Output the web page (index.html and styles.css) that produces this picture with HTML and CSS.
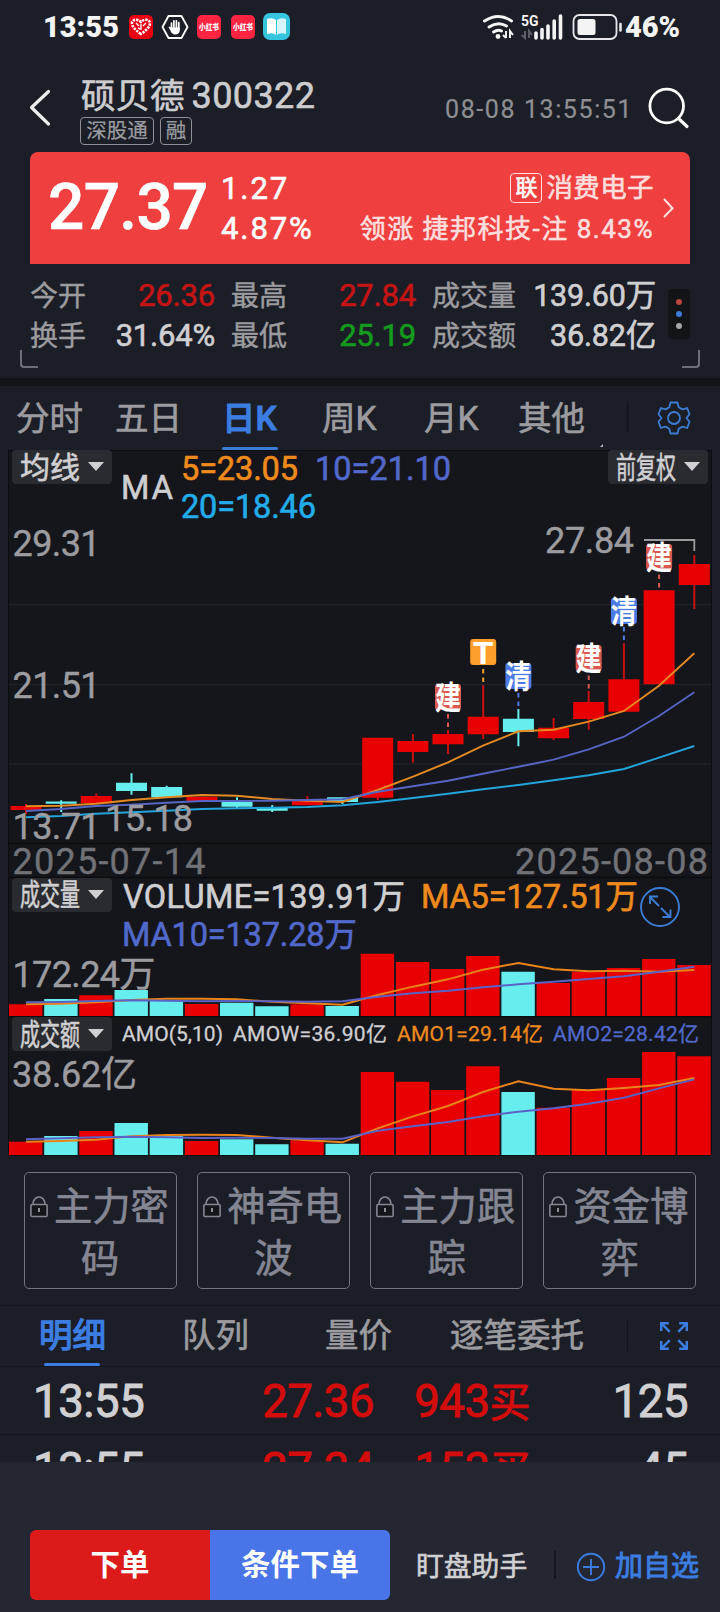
FILE: index.html
```html
<!DOCTYPE html>
<html lang="zh-CN">
<head>
<meta charset="utf-8">
<title>硕贝德 300322</title>
<link rel="stylesheet" href="styles.css">
</head>
<body>
<div class="status">
  <span class="clock">13:55</span>
  <svg class="st-icons" width="162" height="28" viewBox="129 13 162 28">
    <rect x="129" y="15" width="24" height="24" rx="5" fill="#e60012"/>
    <path d="M141 34C134 29 132 26 132 23c0-3 5-5 9-1 4-4 9-2 9 1 0 3-2 6-9 11z" fill="none" stroke="#fff" stroke-width="2.6" stroke-dasharray="2.4 1"/>
    <path d="M136 23l3 3M141 24v6M146 23l-3 3M138 28l2 1" stroke="#fff" stroke-width="1.4"/>
    <path d="M168.500 16h13l6 11-6 11h-13l-6-11z" fill="none" stroke="#fff" stroke-width="1.800" stroke-linejoin="round"/>
    <path d="M171.500 23v6M173.900 20.800v8M176.400 20.800v8M178.800 22.500v7M169.500 27.500l3 4" stroke="#fff" stroke-width="1.700" stroke-linecap="round"/>
    <path d="M170.700 27.500h9v3c0 5-7 5.500-9 1z" fill="#fff"/>
    <rect x="197" y="15" width="24" height="24" rx="5" fill="#ff2442"/>
    <rect x="231" y="15" width="24" height="24" rx="5" fill="#ff2442"/>
    <g class="xhs"><text x="199" y="30" textLength="20" lengthAdjust="spacingAndGlyphs">小红书</text><text x="233" y="30" textLength="20" lengthAdjust="spacingAndGlyphs">小红书</text></g>
    <rect x="263" y="13" width="27" height="27" rx="7" fill="#35c5de"/>
    <path d="M267 19q6-2 9 1v15q-3-3-9-1z" fill="#fff"/><path d="M286 19q-6-2-9 1v15q3-3 9-1z" fill="#d6f6fb"/>
  </svg>
  <svg class="st-right" width="142" height="28" viewBox="481 13 142 28">
    <g fill="none" stroke="#f4f4f5" stroke-width="3" stroke-linecap="round">
      <path d="M484.500 21q14-9 27 0"/><path d="M489 27q9-6 17.500-1"/><path d="M493.500 32q4.500-3 8-1"/>
    </g>
    <circle cx="498" cy="36.500" r="2.400" fill="#f4f4f5"/>
    <path d="M506 31v7M503 35l3 3M510 38v-7l3 4" fill="none" stroke="#f4f4f5" stroke-width="2"/>
    <text class="net" x="521" y="26" textLength="17.500" lengthAdjust="spacingAndGlyphs">5G</text>
    <path d="M525 31v7l-3-3M529 38v-7l3 4" fill="none" stroke="#5b5d66" stroke-width="2"/>
    <path d="M536 33v5M542 29.500v8.500M548 26v12M554.200 21v17M560.500 16v22" stroke="#f4f4f5" stroke-width="3.600" stroke-linecap="round"/>
    <rect x="573.500" y="15" width="43" height="24" rx="6" fill="none" stroke="#e6e6ea" stroke-width="1.800"/>
    <rect x="577.500" y="19" width="18" height="16" rx="2.500" fill="#f4f4f5"/>
    <path d="M620.500 24v6.500" stroke="#e6e6ea" stroke-width="2.600" stroke-linecap="round"/>
  </svg>
  <span class="batt">46%</span>
</div>

<header class="head">
  <svg class="back" width="26" height="40" viewBox="27 88 26 40"><path d="M48.500 91.500L31.500 107.500L48.500 124" fill="none" stroke="#ededee" stroke-width="3.200" stroke-linecap="round" stroke-linejoin="round"/></svg>
  <div class="stock">
    <div class="stock-name"><span>硕贝德</span><span class="code">300322</span></div>
    <div class="tags"><span class="tag tag-w">深股通</span><span class="tag">融</span></div>
  </div>
  <span class="stamp">08-08 13:55:51</span>
  <svg class="search" width="44" height="44" viewBox="648 86 44 44"><circle cx="667.700" cy="106" r="16.800" fill="none" stroke="#fff" stroke-width="2.800"/><path d="M679.500 118.500l8.500 8" stroke="#fff" stroke-width="3.200" stroke-linecap="round"/></svg>
</header>

<section class="banner">
  <div class="price">27.37</div>
  <div class="change"><span>1.27</span><span>4.87%</span></div>
  <div class="sector">
    <div class="sector-top"><span class="link">联</span><span class="sector-name">消费电子</span></div>
    <div class="leader">领涨 捷邦科技-注 8.43%</div>
  </div>
  <svg width="14" height="24" viewBox="662 196 14 24"><path d="M664 199l8.500 9.200L664 217" fill="none" stroke="#ffe3e2" stroke-width="2"/></svg>
</section>

<section class="stats">
  <div class="stat-grid">
    <span class="lab">今开</span><span class="val red">26.36</span>
    <span class="lab">最高</span><span class="val red">27.84</span>
    <span class="lab">成交量</span><span class="val">139.60万</span>
    <span class="lab">换手</span><span class="val">31.64%</span>
    <span class="lab">最低</span><span class="val green">25.19</span>
    <span class="lab">成交额</span><span class="val">36.82亿</span>
  </div>
  <div class="more"><i class="d1"></i><i class="d2"></i><i class="d3"></i></div>
  <i class="corner cl"></i><i class="corner cr"></i>
</section>

<nav class="ktabs">
  <span class="kt k1">分时</span><span class="kt k2">五日</span><span class="kt k3 on">日K</span><span class="kt k4">周K</span><span class="kt k5">月K</span><span class="kt k6">其他</span>
  <svg class="tab-tail" width="104" height="64" viewBox="596 386 104 64">
    <path d="M603 444v3h-3z" fill="#b9b9bd"/>
    <path d="M627.500 403v29" stroke="#121318" stroke-width="1.400"/>
    <g fill="none" stroke="#3b7dd2" stroke-width="1.800" stroke-linejoin="round">
      <circle cx="674" cy="418" r="6"/>
      <path d="M670.500 402.500h7l1.200 4.800 3.800 2.100 4.700-1.400 2.300 6.200-3 3.800 3 3.800-2.300 6.200-4.700-1.400-3.800 2.100-1.200 4.800h-7l-1.200-4.800-3.800-2.100-4.700 1.400-2.300-6.200 3-3.800-3-3.800 2.300-6.200 4.700 1.400 3.800-2.100z"/>
    </g>
  </svg>
</nav>

<section class="charts">
  <svg class="plot" width="720" height="706" viewBox="0 450 720 706">
    <rect x="8.500" y="450.500" width="703" height="705.500" fill="#15161b" stroke="#0c0d10"/>
    <path d="M9 604.500H711M9 684.500H711M9 764H711" stroke="#212227" stroke-width="1.300"/>
    <path d="M9 843.500H711M9 877.500H711M9 1016.800H711" stroke="#0b0c0f" stroke-width="1.500"/>

    <g stroke="#c81010" stroke-width="2">
      <path d="M26 804V814M96.300 793.500V803M307.400 796V805M377.700 738V800M412.900 734V762.700M448 730V754M483.200 685V739M553.600 718V740M588.700 691V729.700M623.900 643.300V711M694.300 555V609"/>
    </g>
    <path d="M61.200 800.300V812M131.500 773.300V794.700M166.700 785.700V798M237 797.300V809M272.200 805V812M342.500 798V804M518.400 709V746.300" stroke="#66eeee" stroke-width="2"/>
    <path d="M26 806V810M96.300 796V803.300M201.900 796.700V801M307.400 801V805.300M377.700 737.700V797.700M412.900 741V752M448 734V744.300M483.200 716.700V734.300M553.600 727.700V738.300M588.700 702V719M623.900 679.300V711.700M659.100 590.300V684.300M694.300 564V585" stroke="#e80000" stroke-width="31"/>
    <path d="M61.200 801.500V803.700M131.500 782.700V791M166.700 787V797.300M237 801.700V806.700M272.200 808V810.700M342.500 797.300V802M518.400 718.700V732" stroke="#66eeee" stroke-width="31"/>

    <g fill="none" stroke-width="1.900">
      <polyline stroke="#e58a22" points="26,806.300 61,805.700 96,803.700 131.500,800 166.700,797.300 202,795 237,795.700 272,799 307.400,800.700 342.500,802 377.700,790 413,776.700 448,762.300 483,745.700 518.400,731.300 553.600,729.700 588.700,721.700 624,711 659,685.700 694.300,653.300"/>
      <polyline stroke="#5566c4" points="26,811 61,809 96,806 131.500,804.700 166.700,802.700 202,801 237,801 272,800.700 307.400,800 342.500,799.300 377.700,791.700 413,786.300 448,780.700 483,773.700 518.400,766.700 553.600,759.700 588.700,749.300 624,736.700 659,716 694.300,692.300"/>
      <polyline stroke="#22a5da" points="26,817.300 61,816 96,813.700 131.500,812.300 166.700,810.700 202,809 237,808.300 272,807.700 307.400,807 342.500,805.300 377.700,802 413,798 448,793.700 483,789.300 518.400,785 553.600,780.300 588.700,775.300 624,769 659,757.700 694.300,746"/>
      <path d="M644 540H694.300V551" stroke="#9a9a9f" stroke-width="1.800"/>
    </g>

    <g stroke-width="2" stroke-dasharray="4.500 4">
      <path d="M448 714V730M588.700 675.500V691M659.100 574.500V590" stroke="#d8594f"/>
      <path d="M483.200 669V685" stroke="#f5a02e"/>
      <path d="M518.400 693V709M623.900 627V643" stroke="#4d7be6"/>
    </g>
    <g fill="#d8594f"><rect x="435" y="684" width="26" height="26" rx="3"/><rect x="575.700" y="645" width="26" height="26" rx="3"/><rect x="646.100" y="544" width="26" height="26" rx="3"/></g>
    <g fill="#4d7be6"><rect x="505.400" y="663" width="26" height="26" rx="3"/><rect x="610.900" y="598" width="26" height="26" rx="3"/></g>
    <rect x="470.200" y="639" width="26" height="26" rx="3" fill="#ff9e2b"/>
    <g class="flag">
      <text transform="translate(448 708.500) scale(.82 1)">建</text>
      <text transform="translate(588.700 669.500) scale(.82 1)">建</text>
      <text transform="translate(659.100 568.500) scale(.82 1)">建</text>
      <text transform="translate(518.400 687.500) scale(.82 1)">清</text>
      <text transform="translate(623.900 622.500) scale(.82 1)">清</text>
      <text transform="translate(483.200 664) scale(1.050 1)">T</text>
    </g>

    <g class="legend">
      <text x="121" y="498.500" textLength="52" color="#cfcfd2">MA</text>
      <text x="181" y="480" textLength="117" color="#ef8a1c">5=23.05</text>
      <text x="315" y="480" textLength="136" color="#5269cc">10=21.10</text>
      <text x="181" y="518" textLength="135" color="#22acea">20=18.46</text>
      <text x="123" y="908" textLength="282" color="#cfcfd2">VOLUME=139.91万</text>
      <text x="421" y="908" textLength="217" color="#ef8a1c">MA5=127.51万</text>
      <text x="122" y="946" textLength="235" color="#5269cc">MA10=137.28万</text>
    </g>
    <g class="axis">
      <text x="12.500" y="556" textLength="88">29.31</text>
      <text x="12.500" y="698" textLength="88">21.51</text>
      <text x="12.500" y="839" textLength="88">13.71</text>
      <text x="105" y="831" textLength="88">15.18</text>
      <text x="545" y="553" textLength="89">27.84</text>
      <text x="12.500" y="987" textLength="143">172.24万</text>
      <text x="12" y="1086.500" textLength="125">38.62亿</text>
      <text class="day" x="12.500" y="874" textLength="193">2025-07-14</text>
      <text class="day" x="515" y="874" textLength="193">2025-08-08</text>
    </g>
    <g class="amo">
      <text x="122" y="1041.300" textLength="101" color="#cfcfd2">AMO(5,10)</text>
      <text x="233" y="1041.300" textLength="154" color="#cfcfd2">AMOW=36.90亿</text>
      <text x="397" y="1041.300" textLength="146" color="#ef8a1c">AMO1=29.14亿</text>
      <text x="553" y="1041.300" textLength="146" color="#5269cc">AMO2=28.42亿</text>
    </g>
    <g fill="none" stroke="#3b7dd2" stroke-width="1.900">
      <circle cx="660" cy="907" r="19"/>
      <path d="M659 906l-9-9M650 904v-7.500h8M661 908l9 9M670.500 909.500v7.500h-8"/>
    </g>

    <g stroke-width="33.400">
      <path stroke="#e80000" d="M25.700 1016V1004.300M96 1016V995.300M201.600 1016V1004M307.100 1016V1004.300M377.400 1016V953.700M412.600 1016V962M447.700 1016V969M482.900 1016V956M553.300 1016V983M588.400 1016V971.700M623.600 1016V968M658.800 1016V959M694 1016V965"/>
      <path stroke="#66eeee" d="M60.900 1016V999M131.200 1016V990M166.400 1016V1000.300M236.700 1016V1002.700M271.900 1016V1006.300M342.200 1016V1006M518.100 1016V971.700"/>
      <path stroke="#e80000" d="M25.700 1155V1141.700M96 1155V1131M201.600 1155V1141M307.100 1155V1140.300M377.400 1155V1072M412.600 1155V1081.700M447.700 1155V1090M482.900 1155V1066.300M553.300 1155V1107.700M588.400 1155V1090M623.600 1155V1078M658.800 1155V1052M694 1155V1056.300"/>
      <path stroke="#66eeee" d="M60.900 1155V1136M131.200 1155V1123M166.400 1155V1136M236.700 1155V1139.300M271.900 1155V1144.300M342.200 1155V1143.700M518.100 1155V1092"/>
    </g>
    <g fill="none" stroke-width="1.900">
      <polyline stroke="#e98418" points="26,1004.300 61,1003.700 96,1002.300 131.500,1000 166.700,998.700 202,998.700 237,999.300 272,1001.700 307.400,1003.300 342.500,1004.700 377.700,995 413,986.700 448,979.300 483,969.700 518.400,963 553.600,969.300 588.700,971.300 624,970.700 659,971.700 694.300,970"/>
      <polyline stroke="#5a62c8" points="26,1002.300 61,1002 96,1001 131.500,1000.300 166.700,1000.700 202,1001.300 237,1001 272,1001.300 307.400,1001.700 342.500,1001.300 377.700,996.700 413,993.300 448,990.700 483,987.300 518.400,984.300 553.600,981.700 588.700,979 624,976.300 659,971.700 694.300,966.700"/>
      <polyline stroke="#e98418" points="26,1141.700 61,1141 96,1139.700 131.500,1136.300 166.700,1135 202,1134.700 237,1135 272,1137.700 307.400,1140.300 342.500,1142.300 377.700,1128.300 413,1116.300 448,1106 483,1092 518.400,1081.300 553.600,1088.700 588.700,1090.300 624,1088 659,1085 694.300,1078"/>
      <polyline stroke="#5a62c8" points="26,1139.300 61,1138.300 96,1137.300 131.500,1136.700 166.700,1137.300 202,1138 237,1137.700 272,1138 307.400,1138.700 342.500,1138.700 377.700,1130.700 413,1126.300 448,1122 483,1116.300 518.400,1111.700 553.600,1108.300 588.700,1103.700 624,1097.700 659,1088.300 694.300,1079.300"/>
    </g>
  </svg>
  <div class="pane pane-k">
    <button class="drop wide"><span>均线</span><i></i></button>
    <button class="drop"><span>前复权</span><i></i></button>
  </div>
  <div class="pane pane-v"><button class="drop"><span>成交量</span><i></i></button></div>
  <div class="pane pane-a"><button class="drop"><span>成交额</span><i></i></button></div>
</section>

<section class="locks">
  <div class="lock"><svg width="18" height="22" viewBox="0 0 18 22"><g id="padlock" fill="none" stroke="#858693" stroke-width="1.600"><path d="M3 8.500C3 -1.500 15 -1.500 15 8.500"/><rect x=".9" y="8.500" width="16.200" height="12" rx="1" fill="#15161b"/><path d="M9 12v4" stroke="#b0b0b8"/></g></svg><span>主力密</span><b>码</b></div>
  <div class="lock"><svg width="18" height="22" viewBox="0 0 18 22"><use href="#padlock"/></svg><span>神奇电</span><b>波</b></div>
  <div class="lock"><svg width="18" height="22" viewBox="0 0 18 22"><use href="#padlock"/></svg><span>主力跟</span><b>踪</b></div>
  <div class="lock"><svg width="18" height="22" viewBox="0 0 18 22"><use href="#padlock"/></svg><span>资金博</span><b>弈</b></div>
</section>

<nav class="dtabs">
  <span class="dt on">明细</span><span class="dt">队列</span><span class="dt">量价</span><span class="dt dt-w">逐笔委托</span>
  <i class="vline"></i>
  <svg class="expand" width="30" height="30" viewBox="659 1321 30 30" fill="none" stroke="#3b7de0" stroke-width="2.400"><path d="M661.200 1331v-7.800h7.600M661.200 1323.200l8.600 8.600M679.200 1323.200h7.600v7.800M686.800 1323.200l-8.600 8.600M661.200 1341v7.800h7.600M661.200 1348.800l8.600-8.600M679.200 1348.800h7.600v-7.800M686.800 1348.800l-8.600-8.600"/></svg>
</nav>

<section class="list">
  <div class="row"><span>13:55</span><span class="red2">27.36</span><span class="red2">943<em>买</em></span><span>125</span></div>
  <div class="row"><span>13:55</span><span class="red2">27.34</span><span class="red2">153<em>买</em></span><span>45</span></div>
</section>

<footer class="foot">
  <button class="order">下单</button><button class="cond">条件下单</button>
  <span class="watch">盯盘助手</span>
  <i class="fline"></i>
  <span class="add"><svg width="30" height="30" viewBox="0 0 30 30" fill="none" stroke="#3b7de0" stroke-width="1.900"><circle cx="15" cy="15" r="13.200"/><path d="M7 15h16M15 7v16"/></svg>加自选</span>
</footer>
</body>
</html>
```
FILE: styles.css
```css
* { box-sizing: border-box; }
body {
  margin: 0; width: 720px; height: 1612px; overflow: hidden;
  background: #1c1e27; color: #d0d0d2;
  font-family: Roboto, "Noto Sans CJK SC", sans-serif; font-weight: 400;
  -webkit-text-stroke: .6px;
}
i, em { font-style: normal; }
svg { display: block; flex: none; }
button { border: 0; padding: 0; font: inherit; color: inherit; }

.status { height: 54px; display: flex; align-items: center; padding-left: 43px; -webkit-text-stroke: 0; }
.clock, .batt { font-size: 29px; line-height: 58px; font-weight: 900; color: #f4f4f5; white-space: nowrap; }
.clock { width: 86px; }
.st-icons { width: 162px; }
.st-right { margin-left: 190px; }
.batt { margin-left: 2px; }
.xhs { font: 900 8.500px "Noto Sans CJK SC", sans-serif; fill: #fff; }
.net { font: 700 15px Roboto, sans-serif; fill: #f4f4f5; }

.head { height: 98px; display: flex; align-items: flex-start; padding-left: 27px; }
.back { margin-top: 34px; }
.stock { width: 365px; padding: 20px 0 0 27px; }
.stock-name { display: flex; height: 43px; align-items: center; font-size: 34.500px; line-height: 44px; white-space: nowrap; color: #cdcdcf; padding-left: 1px; }
.code { font-size: 36px; margin-left: 7px; letter-spacing: .4px; }
.tags { display: flex; gap: 6px; }
.tag { width: 32px; height: 28px; border: 1.500px solid #8f9096; border-radius: 4px; font-size: 20.500px; line-height: 27px; text-align: center; color: #9b9ca1; -webkit-text-stroke: .2px; }
.tag-w { width: 74px; }
.stamp { margin-top: 40px; margin-left: 27px; width: 202px; font-size: 25px; line-height: 32px; letter-spacing: 1.600px; color: #8e8e93; -webkit-text-stroke: .2px; white-space: nowrap; }
.search { margin-top: 32px; }

.banner { margin: 0 30px; height: 112px; background: #ef403f; border-radius: 8px 8px 0 0; display: flex; align-items: center; padding: 0 14px 0 18px; color: #fff; }
.price { width: 173px; font-size: 64px; line-height: 114px; letter-spacing: -.7px; font-weight: 500; }
.change { width: 96px; display: flex; flex-direction: column; font-size: 31px; line-height: 40.500px; letter-spacing: 1.900px; padding-top: 2px; }
.sector { flex: 1; display: flex; flex-direction: column; align-items: flex-end; color: #ffdedd; line-height: 40px; white-space: nowrap; margin-right: 8px; padding-top: 1px; }
.sector-top { display: flex; align-items: center; height: 40px; gap: 4px; }
.link { width: 32px; height: 30px; border: 1.500px solid #ffdedd; border-radius: 4px; font-size: 22px; line-height: 28px; text-align: center; color: #fff; }
.sector-name { font-size: 26.500px; letter-spacing: .4px; line-height: 42px; }
.leader { font-size: 26px; letter-spacing: 1.500px; line-height: 42px; }

.stats { position: relative; height: 122px; padding: 12px 30px 0; border-bottom: 8px solid #131417; display: flex; }
.stat-grid { width: 626px; display: grid; grid-template-columns: 75px 110px 73px 128px 92px 148px; grid-auto-rows: 40px; line-height: 40px; white-space: nowrap; }
.lab { font-size: 28px; color: #9c9ca0; -webkit-text-stroke: .4px; padding-top: 1px; }
.lab:nth-child(6n+3), .lab:nth-child(6n+5) { padding-left: 16px; }
.val { font-size: 31px; text-align: right; letter-spacing: -.2px; }
.lab:nth-child(6n+5) + .val { font-size: 30.500px; }
.red { color: #c41414; } .green { color: #149a1c; }
.more { margin: 13px 0 0 12px; width: 22px; height: 50px; border-radius: 4px; background: #131418; display: flex; flex-direction: column; align-items: center; justify-content: center; gap: 6px; }
.more i { width: 6px; height: 6px; border-radius: 3px; }
.d1 { background: #b8463c; } .d2 { background: #3b7dd8; } .d3 { background: #a6a6aa; }
.corner { position: absolute; top: 86px; width: 18px; height: 18px; border-bottom: 2px solid #6e6f76; }
.cl { left: 20px; border-left: 2px solid #6e6f76; border-bottom-left-radius: 4px; }
.cr { right: 20px; border-right: 2px solid #6e6f76; border-bottom-right-radius: 4px; }

.ktabs { height: 64px; display: flex; padding-left: 16px; }
.kt { font-size: 33.500px; line-height: 65px; height: 64px; color: #9c9ca0; white-space: nowrap; }
.kt.on { color: #3b7de0; font-weight: 500; -webkit-text-stroke: 1px; }
.kt.on::after { content: ""; display: block; width: 56px; height: 3px; margin-top: -4px; border-radius: 2px; background: #3b7dd2; }
.k1 { width: 99px; } .k2 { width: 107px; } .k3 { width: 100px; } .k4 { width: 102px; } .k5 { width: 94px; } .k6 { width: 78px; }

.charts { position: relative; height: 706px; }
.plot { position: absolute; left: 0; top: 0; }
.pane { position: relative; display: flex; justify-content: space-between; align-items: flex-start; padding: 0 12px; }
.pane-k { height: 427.500px; } .pane-v { height: 139.500px; } .pane-a { height: 139px; }
.drop { width: 100px; height: 34px; border-radius: 4px; background: #2a2b30; color: #d0d0d2; display: flex; align-items: center; padding-left: 8px; }
.drop span { flex: none; width: 90px; font-size: 30px; line-height: 35px; white-space: nowrap; transform: scaleX(.667); transform-origin: 0 50%; margin-right: -22px; text-align: left; }
.drop.wide span { width: 60px; transform: none; margin-right: 8px; }
.drop i { border: 8px solid transparent; border-top: 9px solid #d0d0d2; border-bottom: 0; margin-top: -1px; }
.flag { font: 700 32px Roboto, "Noto Sans CJK SC", sans-serif; fill: #fff; text-anchor: middle; }
.legend { font-size: 32.500px; stroke-width: .6px; }
.legend text, .amo text { fill: currentColor; stroke: currentColor; }
.axis { font-size: 36px; fill: #9c9ca0; stroke: #9c9ca0; stroke-width: .4px; }
.axis .day { fill: #717277; stroke: #717277; }
.amo { font-size: 21px; stroke-width: .3px; }

.locks { height: 150px; padding: 16px 24px 0; display: grid; grid-template-columns: repeat(4, 152.500px); justify-content: space-between; border-bottom: 1px solid #14151a; }
.lock { height: 117px; border: 1.500px solid #737480; border-radius: 5px; display: flex; flex-wrap: wrap; align-content: flex-start; align-items: center; padding: 8px 0 0 5px; color: #858693; font-size: 38.300px; line-height: 51.500px; }
.lock span { margin-left: 6px; white-space: nowrap; }
.lock b { width: 100%; text-align: center; font-weight: 400; padding-right: 5px; }

.dtabs { height: 61px; display: flex; padding-left: 39px; border-bottom: 1px solid #14151a; }
.dt { width: 143px; font-size: 33.500px; line-height: 60px; height: 61px; color: #9c9ca0; white-space: nowrap; }
.dt:nth-child(3) { width: 125px; }
.dt-w { width: 177px; }
.dt.on { color: #3b7de0; -webkit-text-stroke: 1.300px; }
.dt.on::after { content: ""; display: block; width: 56px; height: 3px; margin: -3px 0 0 5px; border-radius: 2px; background: #3b7de0; }
.vline { width: 1px; height: 30px; margin-top: 15px; background: #121318; }
.expand { margin: 15px 0 0 31px; }

.list { height: 95px; overflow: hidden; }
.row { height: 68px; border-bottom: 1px solid #14151a; display: grid; grid-template-columns: 114px 227px 156px 158px; padding-left: 33px; font-size: 45.500px; line-height: 70px; white-space: nowrap; -webkit-text-stroke: .9px; }
.row span:first-child { letter-spacing: -.4px; }
.row span:nth-child(n+2) { text-align: right; letter-spacing: -.5px; }
.row em { font-size: 41px; }
.red2 { color: #d40c0c; }

.foot { height: 150px; background: #242632; display: flex; align-items: flex-start; padding: 68px 0 0 30px; font-size: 29.500px; line-height: 70px; }
.order, .cond { width: 180px; height: 70px; color: #fff; font-weight: 700; -webkit-text-stroke: 0; }
.order { background: #dc1a1a; border-radius: 6px 0 0 6px; }
.cond { background: #4a75e8; border-radius: 0 6px 6px 0; }
.watch { width: 138px; margin-left: 26px; font-size: 27.800px; line-height: 74px; }
.fline { width: 2px; height: 28px; margin-top: 21px; background: #15161c; }
.add { display: flex; align-items: center; gap: 9px; margin-left: 20px; font-size: 28px; line-height: 74px; color: #3b7de0; -webkit-text-stroke: .9px; }
```
